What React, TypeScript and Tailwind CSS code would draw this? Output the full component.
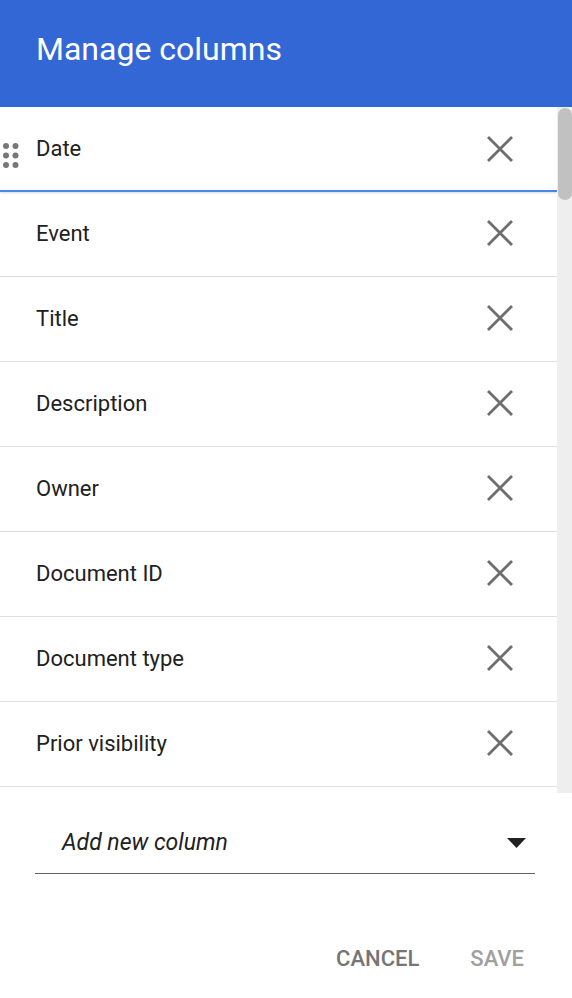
import { useState } from "react";

const columns = [
  "Date",
  "Event",
  "Title",
  "Description",
  "Owner",
  "Document ID",
  "Document type",
  "Prior visibility",
  "Status",
];

function CloseIcon() {
  return (
    <svg width="26" height="26" viewBox="0 0 26 26" className="block">
      <path d="M1 1L25 25M25 1L1 25" stroke="#6e6e6e" strokeWidth="2.8" />
    </svg>
  );
}

function DragHandle() {
  return (
    <svg width="16" height="26" viewBox="0 0 16 26" className="block">
      {[4, 13.5, 23].map((cy) => (
        <g key={cy}>
          <circle cx="3" cy={cy} r="3" fill="#777" />
          <circle cx="12.5" cy={cy} r="3" fill="#777" />
        </g>
      ))}
    </svg>
  );
}

function ColumnRow({ name, active }: { name: string; active?: boolean }) {
  return (
    <div
      className={
        active
          ? "relative flex h-[86px] shrink-0 items-center border-b-2 border-[#4a86e8] pt-px shadow-[0_1px_2px_rgba(0,0,0,0.15)]"
          : "relative flex h-[85px] shrink-0 items-center border-b border-[#e0e0e0] pb-[2px]"
      }
    >
      {active && (
        <div className="absolute left-[3px] top-[36px]">
          <DragHandle />
        </div>
      )}
      <span className="pl-9 text-[22px] text-[#212121]">{name}</span>
      <button className="ml-auto mr-[44px]">
        <CloseIcon />
      </button>
    </div>
  );
}

export default function App() {
  const [items] = useState(columns);

  return (
    <div className="flex h-[998px] w-[572px] flex-col bg-white font-['Roboto',sans-serif]">
      <header className="flex h-[107px] shrink-0 items-center bg-[#3367d6] pb-[10px] pl-9">
        <h1 className="text-[32px] text-white">Manage columns</h1>
      </header>

      <div className="flex h-[686px] shrink-0">
        <div className="-mt-px flex flex-1 flex-col overflow-hidden">
          {items.map((name, i) => (
            <ColumnRow key={name} name={name} active={i === 0} />
          ))}
        </div>
        <div className="w-[15px] bg-[#eeeeee] pt-px pl-px">
          <div className="h-[92px] rounded-full bg-[#c1c1c1]" />
        </div>
      </div>

      <div className="pl-[35px] pr-[37px] pt-[27px]">
        <div className="flex h-[54px] items-center border-b-[1.5px] border-[#616161] pb-[8px] pl-[27px] pr-[9px]">
          <span className="pr-1 text-[23px] leading-[30px] italic text-[#212121]">Add new column</span>
          <svg width="19" height="10" viewBox="0 0 19 10" className="ml-auto">
            <path d="M0 0H19L9.5 10Z" fill="#212121" />
          </svg>
        </div>
      </div>

      <div className="mt-auto flex justify-end gap-[51px] pb-[23px] pr-[48px]">
        <button className="text-[22px] font-medium uppercase text-[#757575]">Cancel</button>
        <button className="text-[22px] font-medium uppercase text-[#a0a0a0]">Save</button>
      </div>
    </div>
  );
}
